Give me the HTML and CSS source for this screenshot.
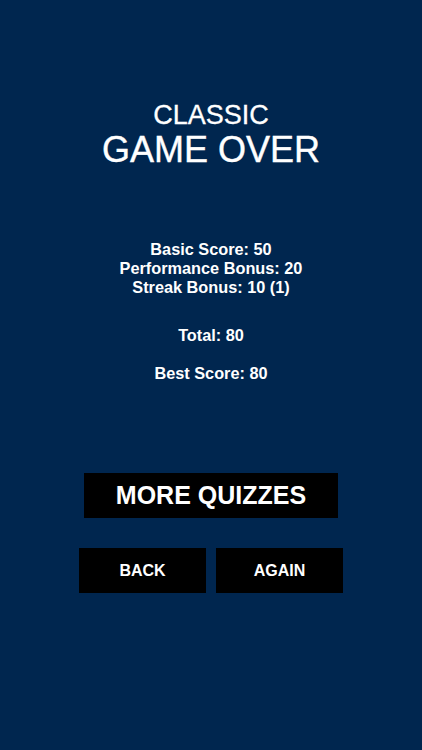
FILE: index.html
```html
<!DOCTYPE html>
<html>
<head>
<meta charset="utf-8">
<link rel="stylesheet" href="styles.css">
</head>
<body>
<main class="screen">
  <header class="heading">
    <div class="mode">CLASSIC</div>
    <div class="title">GAME OVER</div>
  </header>
  <section class="scores">
    <div class="line">Basic Score: 50</div>
    <div class="line">Performance Bonus: 20</div>
    <div class="line">Streak Bonus: 10 (1)</div>
  </section>
  <div class="line total">Total: 80</div>
  <div class="line best">Best Score: 80</div>
  <div class="btn more">MORE QUIZZES</div>
  <div class="row">
    <div class="btn small">BACK</div>
    <div class="btn small">AGAIN</div>
  </div>
</main>
</body>
</html>
```
FILE: styles.css
```css
html, body {
  margin: 0;
  padding: 0;
  background: #00264f;
}
.screen {
  width: 422px;
  height: 750px;
  display: flex;
  flex-direction: column;
  align-items: center;
  color: #ffffff;
  font-family: "Liberation Sans", Arial, sans-serif;
}
.heading {
  margin-top: 100px;
  display: flex;
  flex-direction: column;
  align-items: center;
}
.mode {
  font-size: 27px;
  line-height: 30px;
  -webkit-text-stroke: 0.3px #ffffff;
}
.title {
  font-size: 36px;
  line-height: 40px;
  -webkit-text-stroke: 0.4px #ffffff;
}
.scores {
  margin-top: 70px;
  display: flex;
  flex-direction: column;
  align-items: center;
}
.line {
  font-size: 16.3px;
  font-weight: bold;
  line-height: 19px;
}
.total {
  margin-top: 29px;
}
.best {
  margin-top: 19px;
}
.btn {
  background: #000000;
  color: #ffffff;
  font-weight: bold;
  display: flex;
  align-items: center;
  justify-content: center;
}
.more {
  margin-top: 90px;
  width: 254px;
  height: 45px;
  font-size: 25px;
}
.row {
  margin-top: 30px;
  display: flex;
  gap: 10px;
}
.small {
  width: 127px;
  height: 45px;
  font-size: 16px;
}
```
